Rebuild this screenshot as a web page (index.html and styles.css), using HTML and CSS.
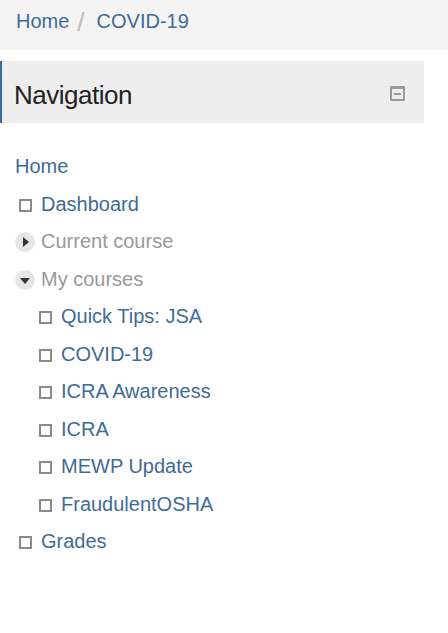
FILE: index.html
```
<!DOCTYPE html>
<html>
<head>
<meta charset="utf-8">
<link rel="stylesheet" href="styles.css">
</head>
<body>
<div class="crumbs">
  <a class="crumb">Home</a>
  <span class="sep">/</span>
  <a class="crumb">COVID-19</a>
</div>
<div class="block">
  <div class="block-head">
    <h2 class="block-title">Navigation</h2>
    <span class="dock-icon"><span class="dock-bar"></span></span>
  </div>
  <ul class="tree">
    <li class="row lvl0"><a class="link">Home</a></li>
    <li class="row lvl1"><span class="box"></span><a class="link">Dashboard</a></li>
    <li class="row lvl1"><span class="toggle"><span class="tri-right"></span></span><span class="muted">Current course</span></li>
    <li class="row lvl1"><span class="toggle"><span class="tri-down"></span></span><span class="muted">My courses</span></li>
    <li class="row lvl2"><span class="box"></span><a class="link">Quick Tips: JSA</a></li>
    <li class="row lvl2"><span class="box"></span><a class="link">COVID-19</a></li>
    <li class="row lvl2"><span class="box"></span><a class="link">ICRA Awareness</a></li>
    <li class="row lvl2"><span class="box"></span><a class="link">ICRA</a></li>
    <li class="row lvl2"><span class="box"></span><a class="link">MEWP Update</a></li>
    <li class="row lvl2"><span class="box"></span><a class="link">FraudulentOSHA</a></li>
    <li class="row lvl1"><span class="box"></span><a class="link">Grades</a></li>
  </ul>
</div>
</body>
</html>
```
FILE: styles.css
```
html, body {
  margin: 0;
  padding: 0;
  background: #fff;
  font-family: "Liberation Sans", Arial, sans-serif;
}
.crumbs {
  height: 50px;
  background: #f4f4f4;
  box-sizing: border-box;
  padding: 6px 0 0 16px;
  font-size: 20px;
  line-height: 30px;
  display: flex;
  align-items: flex-start;
}
.crumb {
  color: #3f6b97;
}
.sep {
  color: #bdbdbd;
  font-size: 26px;
  line-height: 30px;
  margin: 1px 12px 0 8px;
}
.block {
  margin-top: 11px;
}
.block-head {
  width: 424px;
  height: 62px;
  box-sizing: border-box;
  background: #eeeeee;
  border-left: 2px solid #3d6a99;
  display: flex;
  align-items: center;
  justify-content: space-between;
  padding: 0 19px 0 12px;
}
.block-title {
  margin: 0;
  font-weight: normal;
  font-size: 26px;
  letter-spacing: -0.5px;
  color: #222;
  padding-top: 7px;
}
.dock-icon {
  width: 15px;
  height: 15px;
  box-sizing: border-box;
  border: 2px solid #9a9a9a;
  border-top-width: 3px;
  border-radius: 1px;
  display: flex;
  align-items: center;
  justify-content: center;
  margin-top: 2px;
}
.dock-bar {
  width: 7px;
  height: 2px;
  background: #9a9a9a;
}
.tree {
  list-style: none;
  margin: 25px 0 0 0;
  padding: 0;
  font-size: 20px;
}
.row {
  height: 37.5px;
  display: flex;
  align-items: center;
}
.lvl0 { padding-left: 15px; }
.lvl1 { padding-left: 15px; }
.lvl2 { padding-left: 35px; }
.link {
  color: #3f6b97;
}
.muted {
  color: #999999;
}
.box {
  width: 13px;
  height: 13px;
  box-sizing: border-box;
  border: 2px solid #8a8a8a;
  margin: 2px 9px 0 4px;
  flex: none;
}
.toggle {
  width: 20px;
  height: 20px;
  border-radius: 50%;
  background: #e6e6e6;
  display: flex;
  align-items: center;
  justify-content: center;
  margin: 1px 6px 0 0;
  flex: none;
}
.tri-right {
  width: 0;
  height: 0;
  border-top: 5px solid transparent;
  border-bottom: 5px solid transparent;
  border-left: 6px solid #333;
  margin-left: 2px;
}
.tri-down {
  width: 0;
  height: 0;
  border-left: 5px solid transparent;
  border-right: 5px solid transparent;
  border-top: 6px solid #333;
  margin-top: 2px;
}
```
